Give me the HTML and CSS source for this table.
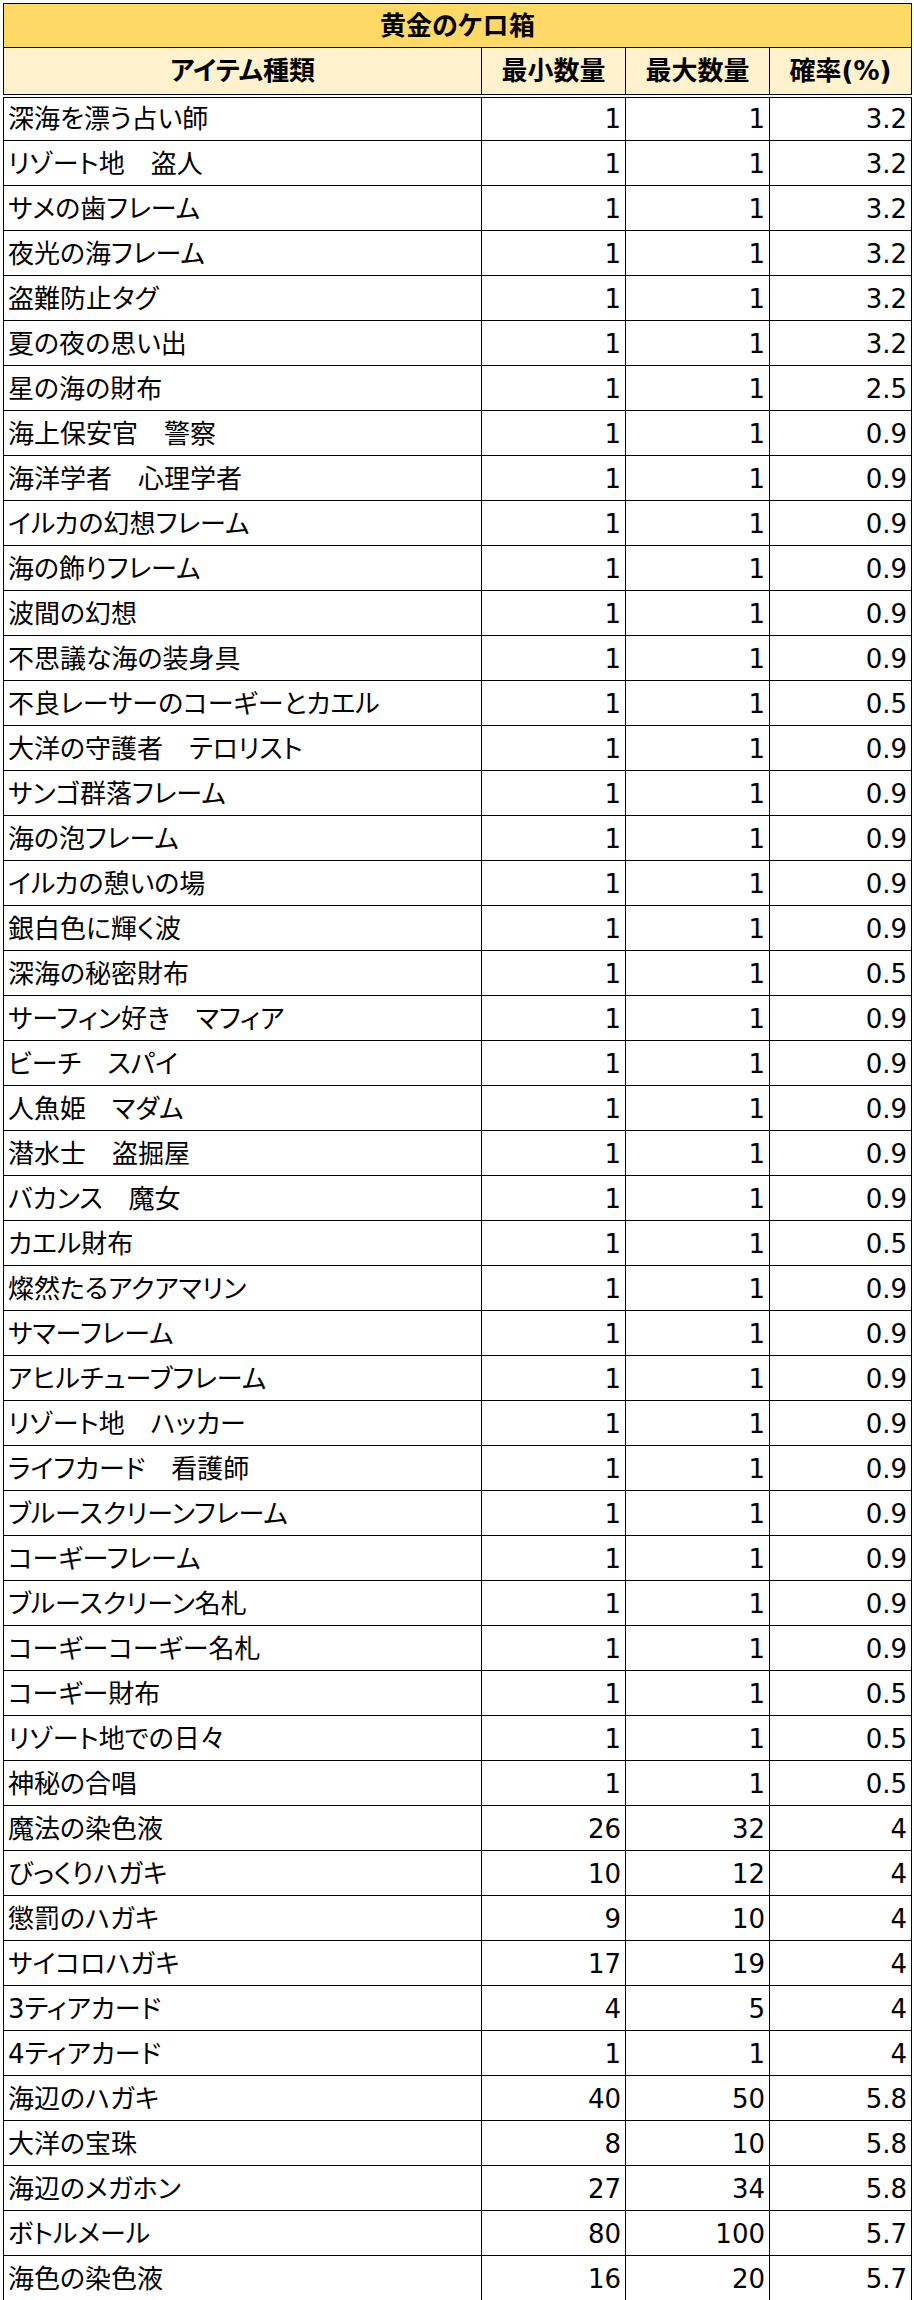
FILE: index.html
```html
<!DOCTYPE html>
<html lang="ja">
<head>
<meta charset="utf-8">
<title>黄金のケロ箱</title>
<link rel="stylesheet" href="styles.css">
</head>
<body>
<table class="drop-table">
  <colgroup>
    <col class="c-name"><col class="c-num"><col class="c-num"><col class="c-rate">
  </colgroup>
  <thead>
    <tr class="title-row"><th colspan="4">黄金のケロ箱</th></tr>
    <tr class="head-row"><th>アイテム種類</th><th>最小数量</th><th>最大数量</th><th>確率(%)</th></tr>
  </thead>
  <tbody>
    <tr><td class="name">深海を漂う占い師</td><td class="num">1</td><td class="num">1</td><td class="num">3.2</td></tr>
    <tr><td class="name">リゾート地　盗人</td><td class="num">1</td><td class="num">1</td><td class="num">3.2</td></tr>
    <tr><td class="name">サメの歯フレーム</td><td class="num">1</td><td class="num">1</td><td class="num">3.2</td></tr>
    <tr><td class="name">夜光の海フレーム</td><td class="num">1</td><td class="num">1</td><td class="num">3.2</td></tr>
    <tr><td class="name">盗難防止タグ</td><td class="num">1</td><td class="num">1</td><td class="num">3.2</td></tr>
    <tr><td class="name">夏の夜の思い出</td><td class="num">1</td><td class="num">1</td><td class="num">3.2</td></tr>
    <tr><td class="name">星の海の財布</td><td class="num">1</td><td class="num">1</td><td class="num">2.5</td></tr>
    <tr><td class="name">海上保安官　警察</td><td class="num">1</td><td class="num">1</td><td class="num">0.9</td></tr>
    <tr><td class="name">海洋学者　心理学者</td><td class="num">1</td><td class="num">1</td><td class="num">0.9</td></tr>
    <tr><td class="name">イルカの幻想フレーム</td><td class="num">1</td><td class="num">1</td><td class="num">0.9</td></tr>
    <tr><td class="name">海の飾りフレーム</td><td class="num">1</td><td class="num">1</td><td class="num">0.9</td></tr>
    <tr><td class="name">波間の幻想</td><td class="num">1</td><td class="num">1</td><td class="num">0.9</td></tr>
    <tr><td class="name">不思議な海の装身具</td><td class="num">1</td><td class="num">1</td><td class="num">0.9</td></tr>
    <tr><td class="name">不良レーサーのコーギーとカエル</td><td class="num">1</td><td class="num">1</td><td class="num">0.5</td></tr>
    <tr><td class="name">大洋の守護者　テロリスト</td><td class="num">1</td><td class="num">1</td><td class="num">0.9</td></tr>
    <tr><td class="name">サンゴ群落フレーム</td><td class="num">1</td><td class="num">1</td><td class="num">0.9</td></tr>
    <tr><td class="name">海の泡フレーム</td><td class="num">1</td><td class="num">1</td><td class="num">0.9</td></tr>
    <tr><td class="name">イルカの憩いの場</td><td class="num">1</td><td class="num">1</td><td class="num">0.9</td></tr>
    <tr><td class="name">銀白色に輝く波</td><td class="num">1</td><td class="num">1</td><td class="num">0.9</td></tr>
    <tr><td class="name">深海の秘密財布</td><td class="num">1</td><td class="num">1</td><td class="num">0.5</td></tr>
    <tr><td class="name">サーフィン好き　マフィア</td><td class="num">1</td><td class="num">1</td><td class="num">0.9</td></tr>
    <tr><td class="name">ビーチ　スパイ</td><td class="num">1</td><td class="num">1</td><td class="num">0.9</td></tr>
    <tr><td class="name">人魚姫　マダム</td><td class="num">1</td><td class="num">1</td><td class="num">0.9</td></tr>
    <tr><td class="name">潜水士　盗掘屋</td><td class="num">1</td><td class="num">1</td><td class="num">0.9</td></tr>
    <tr><td class="name">バカンス　魔女</td><td class="num">1</td><td class="num">1</td><td class="num">0.9</td></tr>
    <tr><td class="name">カエル財布</td><td class="num">1</td><td class="num">1</td><td class="num">0.5</td></tr>
    <tr><td class="name">燦然たるアクアマリン</td><td class="num">1</td><td class="num">1</td><td class="num">0.9</td></tr>
    <tr><td class="name">サマーフレーム</td><td class="num">1</td><td class="num">1</td><td class="num">0.9</td></tr>
    <tr><td class="name">アヒルチューブフレーム</td><td class="num">1</td><td class="num">1</td><td class="num">0.9</td></tr>
    <tr><td class="name">リゾート地　ハッカー</td><td class="num">1</td><td class="num">1</td><td class="num">0.9</td></tr>
    <tr><td class="name">ライフカード　看護師</td><td class="num">1</td><td class="num">1</td><td class="num">0.9</td></tr>
    <tr><td class="name">ブルースクリーンフレーム</td><td class="num">1</td><td class="num">1</td><td class="num">0.9</td></tr>
    <tr><td class="name">コーギーフレーム</td><td class="num">1</td><td class="num">1</td><td class="num">0.9</td></tr>
    <tr><td class="name">ブルースクリーン名札</td><td class="num">1</td><td class="num">1</td><td class="num">0.9</td></tr>
    <tr><td class="name">コーギーコーギー名札</td><td class="num">1</td><td class="num">1</td><td class="num">0.9</td></tr>
    <tr><td class="name">コーギー財布</td><td class="num">1</td><td class="num">1</td><td class="num">0.5</td></tr>
    <tr><td class="name">リゾート地での日々</td><td class="num">1</td><td class="num">1</td><td class="num">0.5</td></tr>
    <tr><td class="name">神秘の合唱</td><td class="num">1</td><td class="num">1</td><td class="num">0.5</td></tr>
    <tr><td class="name">魔法の染色液</td><td class="num">26</td><td class="num">32</td><td class="num">4</td></tr>
    <tr><td class="name">びっくりハガキ</td><td class="num">10</td><td class="num">12</td><td class="num">4</td></tr>
    <tr><td class="name">懲罰のハガキ</td><td class="num">9</td><td class="num">10</td><td class="num">4</td></tr>
    <tr><td class="name">サイコロハガキ</td><td class="num">17</td><td class="num">19</td><td class="num">4</td></tr>
    <tr><td class="name">3ティアカード</td><td class="num">4</td><td class="num">5</td><td class="num">4</td></tr>
    <tr><td class="name">4ティアカード</td><td class="num">1</td><td class="num">1</td><td class="num">4</td></tr>
    <tr><td class="name">海辺のハガキ</td><td class="num">40</td><td class="num">50</td><td class="num">5.8</td></tr>
    <tr><td class="name">大洋の宝珠</td><td class="num">8</td><td class="num">10</td><td class="num">5.8</td></tr>
    <tr><td class="name">海辺のメガホン</td><td class="num">27</td><td class="num">34</td><td class="num">5.8</td></tr>
    <tr><td class="name">ボトルメール</td><td class="num">80</td><td class="num">100</td><td class="num">5.7</td></tr>
    <tr><td class="name">海色の染色液</td><td class="num">16</td><td class="num">20</td><td class="num">5.7</td></tr>
  </tbody>
</table>
</body>
</html>
```
FILE: styles.css
```css
html, body {
  margin: 0;
  padding: 0;
  background: #ffffff;
}

body {
  padding: 3px 0 0 3px;
  font-family: "DejaVu Sans", "Noto Sans CJK JP", sans-serif;
  color: #000000;
}

.drop-table {
  border-collapse: collapse;
  table-layout: fixed;
  width: 908px;
  font-size: 26px;
  line-height: 1.1;
  font-feature-settings: "palt";
}

.c-name { width: 478px; }
.c-num { width: 144px; }
.c-rate { width: 142px; }

.drop-table th,
.drop-table td {
  border: 1px solid #000000;
  height: 45px;
  box-sizing: border-box;
  padding: 2px 4px 0 4px;
  vertical-align: middle;
  white-space: nowrap;
  overflow: hidden;
}

.title-row th {
  background: #ffd966;
  font-weight: bold;
  text-align: center;
  height: 44px;
}

.head-row th {
  background: #fff2cc;
  font-weight: bold;
  text-align: center;
  border-bottom: 4px double #000000;
  height: 48px;
}

.name {
  text-align: left;
}

.num {
  text-align: right;
}
```
